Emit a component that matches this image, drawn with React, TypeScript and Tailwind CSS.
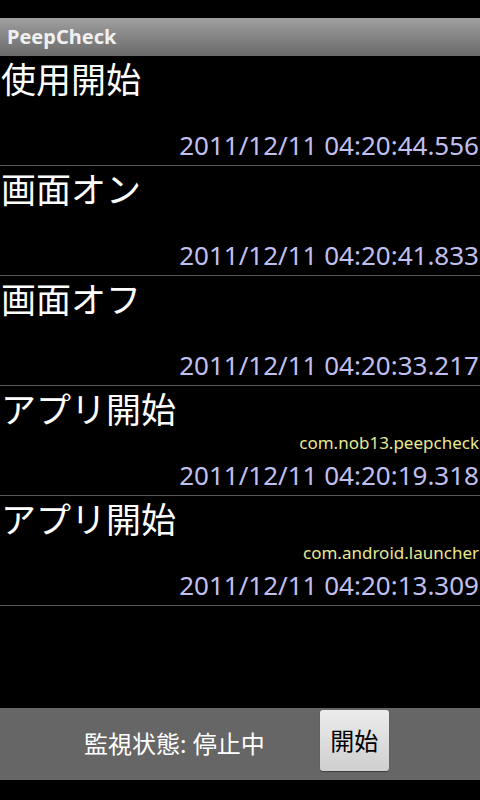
import React from "react";

interface LogEntry {
  title: string;
  pkg?: string;
  time: string;
}

const entries: LogEntry[] = [
  { title: "使用開始", time: "2011/12/11 04:20:44.556" },
  { title: "画面オン", time: "2011/12/11 04:20:41.833" },
  { title: "画面オフ", time: "2011/12/11 04:20:33.217" },
  { title: "アプリ開始", pkg: "com.nob13.peepcheck", time: "2011/12/11 04:20:19.318" },
  { title: "アプリ開始", pkg: "com.android.launcher", time: "2011/12/11 04:20:13.309" },
];

const LogRow: React.FC<LogEntry> = ({ title, pkg, time }) => (
  <li className="h-[110px] flex flex-col border-b border-[#555555]">
    <div className="h-[44px] pl-[1px] text-[35px] leading-[48px] text-white">{title}</div>
    <div className="h-[26px] pr-[1px] text-right text-[17px] leading-[26px] text-[#e8e890]">
      {pkg ?? ""}
    </div>
    <div className="h-[39px] pr-[1px] text-right text-[26px] leading-[39px] text-[#c0c0f0]">
      {time}
    </div>
  </li>
);

export default function App() {
  return (
    <div
      className="w-[480px] h-[800px] bg-black flex flex-col overflow-hidden"
      style={{ fontFamily: '"Noto Sans", "Noto Sans CJK JP", sans-serif' }}
    >
      <div className="h-[18px] bg-black" />
      <div className="h-[38px] bg-gradient-to-b from-[#a0a0a0] to-[#6a6a6a] pl-[7px] flex items-center">
        <span className="text-[20px] font-bold text-[#f0f0f0]">PeepCheck</span>
      </div>
      <ul>
        {entries.map((e, i) => (
          <LogRow key={i} {...e} />
        ))}
      </ul>
      <div className="flex-1" />
      <div className="h-[72px] bg-[#666666] flex items-start">
        <span className="self-center pl-[84px] text-[24px] text-white whitespace-nowrap">
          監視状態: 停止中
        </span>
        <button className="mt-[2px] ml-[55px] w-[69px] h-[61px] rounded-[3px] bg-gradient-to-b from-[#ececec] to-[#cfcfcf] text-[24px] text-black shadow-[0_1px_1px_rgba(0,0,0,0.4)]">
          開始
        </button>
      </div>
      <div className="h-[20px] bg-black" />
    </div>
  );
}
